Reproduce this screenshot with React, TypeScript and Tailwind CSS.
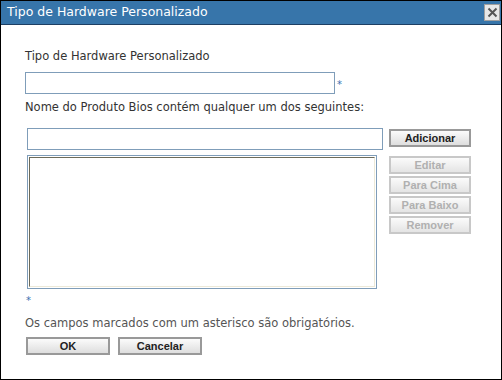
import React from "react";

const btn =
  "w-[82px] h-[18px] border-2 border-[#999999] bg-gradient-to-b from-[#fbfbfb] to-[#dedede] text-[11px] font-bold leading-[14px] text-[#222]";
const btnOff =
  "w-[82px] h-[18px] border-2 border-[#c8c8c8] bg-gradient-to-b from-[#fbfbfb] to-[#e4e4e4] text-[11px] font-bold leading-[14px] text-[#b0b0b0]";
const arial = { fontFamily: '"Liberation Sans", Arial, sans-serif' };

export default function App() {
  return (
    <div
      className="w-[502px] h-[380px] border border-black bg-white flex flex-col"
      style={{ fontFamily: '"DejaVu Sans", Verdana, sans-serif' }}
    >
      {/* Title bar */}
      <div className="h-[24px] bg-[#3775aa] border-b border-[#1d3f63] flex items-center justify-between pl-[6px] pr-[1px]">
        <span className="text-white text-[12.5px] leading-none">
          Tipo de Hardware Personalizado
        </span>
        <button className="w-[16px] h-[17px] bg-[#e8e8e8] border border-[#a0a0a0] flex items-center justify-center">
          <svg width="11" height="11" viewBox="0 0 11 11">
            <path d="M1.5 1.5 L9.5 9.5 M9.5 1.5 L1.5 9.5" stroke="#555" strokeWidth="2" />
          </svg>
        </button>
      </div>

      <div className="flex-1 flex flex-col pl-[24px] pt-[24px] text-[11.5px] text-[#333]">
        <div className="leading-[14px]">Tipo de Hardware Personalizado</div>
        <div className="flex items-start mt-[9px]">
          <input className="w-[310px] h-[22px] border border-[#7f9db9] outline-none" />
          <span className="text-[#3b6fb0] text-[10px] leading-none mt-[8px] ml-[2px]">*</span>
        </div>
        <div className="mt-[6px] leading-[14px]">
          Nome do Produto Bios contém qualquer um dos seguintes:
        </div>

        <div className="flex mt-[14px] ml-[2px]">
          <div className="flex flex-col">
            <input className="w-[356px] h-[22px] border border-[#7f9db9] outline-none" />
            <div className="mt-[5px] w-[350px] h-[134px] border border-[#7f9db9] p-[1px]">
              <div className="w-full h-full border border-t-[#6d6b5a] border-l-[#6d6b5a] border-r-[#ece9d8] border-b-[#ece9d8]" />
            </div>
          </div>
          <div className="flex flex-col ml-[6px] mt-[1px] gap-[2px]" style={arial}>
            <button className={btn}>Adicionar</button>
            <button className={`${btnOff} mt-[7px]`}>Editar</button>
            <button className={btnOff}>Para Cima</button>
            <button className={btnOff}>Para Baixo</button>
            <button className={btnOff}>Remover</button>
          </div>
        </div>

        <div className="text-[#3b6fb0] text-[10px] leading-none mt-[7px] ml-[1px]">*</div>
        <div className="mt-[10px] leading-[14px] text-[#555]">
          Os campos marcados com um asterisco são obrigatórios.
        </div>
        <div className="flex gap-[8px] mt-[7px] ml-[1px]" style={arial}>
          <button className={`${btn} w-[84px]`}>OK</button>
          <button className={`${btn} w-[84px]`}>Cancelar</button>
        </div>
      </div>
    </div>
  );
}
